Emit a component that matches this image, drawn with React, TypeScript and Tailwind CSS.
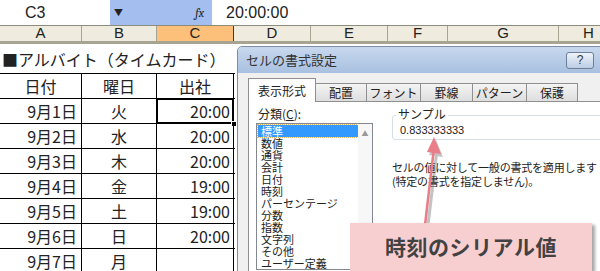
import React from 'react';

const jp = { fontFamily: '"Noto Sans CJK JP", "Noto Sans", sans-serif' };
const ar = { fontFamily: '"Liberation Sans", Arial, sans-serif' };

const rows = [
  ['9月1日', '火', '20:00'],
  ['9月2日', '水', '20:00'],
  ['9月3日', '木', '20:00'],
  ['9月4日', '金', '19:00'],
  ['9月5日', '土', '19:00'],
  ['9月6日', '日', '20:00'],
  ['9月7日', '月', ''],
];

const cols = [
  { k: 'A', w: 'w-[82px]' },
  { k: 'B', w: 'w-[75px]' },
  { k: 'C', w: 'w-[77px]' },
  { k: 'D', w: 'w-[77px]' },
  { k: 'E', w: 'w-[77px]' },
  { k: 'F', w: 'w-[60px]' },
  { k: 'G', w: 'w-[111px]' },
  { k: 'H', w: 'w-[60px]' },
];

const tabs = [
  { t: '表示形式', w: 'w-[68px]' },
  { t: '配置', w: 'w-[52px]' },
  { t: 'フォント', w: 'w-[55px]' },
  { t: '罫線', w: 'w-[53px]' },
  { t: 'パターン', w: 'w-[55px]' },
  { t: '保護', w: 'w-[52px]' },
];

const cats = ['標準', '数値', '通貨', '会計', '日付', '時刻', 'パーセンテージ', '分数', '指数', '文字列', 'その他', 'ユーザー定義'];

export default function App() {
  return (
    <div className="relative w-[600px] h-[271px] overflow-hidden bg-white text-[#222]" style={jp}>
      {/* formula bar */}
      <div className="flex h-[25px] items-center text-[16px]">
        <div className="w-[110px] h-full flex items-center pl-[25px]" style={ar}>C3</div>
        <div className="w-[102px] h-full bg-[#a4bef0] flex items-center justify-between pl-[4px] pr-[8px]">
          <span className="text-[9px] leading-none">▼</span>
          <span className="italic text-[12px] font-serif leading-none">fx</span>
        </div>
        <div className="pl-[14px]" style={ar}>20:00:00</div>
      </div>

      {/* column headers */}
      <div className="flex h-[19px] border-t border-[#8c8c7c] border-b-[3px] border-b-[#a7a491] bg-[#efecdf] text-[15px]" style={ar}>
        {cols.map((c) => (
          <div
            key={c.k}
            className={`${c.w} shrink-0 flex items-center justify-center border-r border-[#a7a491] ${c.k === 'C' ? 'bg-[#fdc07a] border-r-[#1c3a9c]' : ''}`}
          >
            {c.k}
          </div>
        ))}
      </div>

      {/* sheet */}
      <div className="h-[29px] flex items-center pl-[2px] text-[16px]">■アルバイト（タイムカード）</div>
      <div className="flex flex-col w-[235px] border-t border-black text-[16px]">
        <div className="flex h-[25px] border-b border-black">
          <div className="w-[82px] border-r border-black flex items-center justify-center">日付</div>
          <div className="w-[75px] border-r border-black flex items-center justify-center">曜日</div>
          <div className="w-[77px] border-r border-black flex items-center justify-center">出社</div>
        </div>
        {rows.map((r, i) => (
          <div key={r[0]} className="flex h-[25px] border-b border-black">
            <div className="w-[82px] border-r border-black flex items-center justify-end pr-[4px]">{r[0]}</div>
            <div className="w-[75px] border-r border-black flex items-center justify-center">{r[1]}</div>
            <div className="relative w-[77px] border-r border-black flex items-center justify-end pr-[3px]">
              {r[2]}
              {i === 0 && (
                <>
                  <div className="absolute inset-[-1px] border-2 border-black outline outline-1 outline-white -outline-offset-[3px]" />
                  <div className="absolute right-[-4px] bottom-[-4px] w-[6px] h-[6px] bg-black border border-white" />
                </>
              )}
            </div>
          </div>
        ))}
      </div>

      {/* dialog */}
      <div className="absolute left-[237px] top-[46px] w-[380px] h-[240px] rounded-t-[5px] border border-[#7d8ea4] bg-[#f0f0f0]">
        <div className="h-[26px] rounded-t-[5px] bg-gradient-to-b from-[#c8d8ee] to-[#a8c0e0] flex items-center justify-between pl-[8px] pr-[22px]">
          <span className="text-[13px] text-[#333]">セルの書式設定</span>
          <div className="w-[28px] h-[17px] rounded-[3px] border border-[#6e7e94] bg-gradient-to-b from-[#eef3fa] to-[#bccde5] flex items-center justify-center text-[12px] text-[#333]" style={ar}>?</div>
        </div>
        <div className="flex items-end pl-[10px] h-[28px]">
          {tabs.map((t, i) => (
            <div
              key={t.t}
              className={`${t.w} shrink-0 flex items-center justify-center text-[12px] border border-[#8f8f8f] border-b-0 ${
                i === 0 ? 'h-[24px] bg-white z-10 -mb-px' : 'h-[18px] bg-gradient-to-b from-[#f4f4f4] to-[#dedede] -ml-px'
              }`}
            >
              {t.t}
            </div>
          ))}
        </div>
        <div className="ml-[10px] h-[180px] border border-[#8f8f8f] bg-white flex pl-[7px] pt-[5px] gap-[19px]">
          <div className="flex flex-col">
            <div className="text-[12px] leading-[14px] pl-[2px]">
              分類(<span className="underline">C</span>):
            </div>
            <div className="mt-[2px] w-[117px] h-[147px] border border-[#828790] flex">
              <div className="flex-1 flex flex-col pt-[1px] pl-[1px] text-[11px]">
                {cats.map((c, i) => (
                  <div
                    key={c}
                    className={`h-[12.1px] leading-[12px] pl-[3px] whitespace-nowrap ${i === 0 ? 'bg-[#3399ff] text-white outline outline-1 outline-dotted outline-[#f0b060]' : ''}`}
                  >
                    {c}
                  </div>
                ))}
              </div>
              <div className="w-[14px] bg-[#f7f7f7] flex justify-center pt-[6px]">
                <span className="text-[7px] text-[#999] leading-none">▲</span>
              </div>
            </div>
          </div>
          <div className="flex flex-col pt-[8px]">
            <div className="relative w-[220px] h-[25px] border border-[#d5dfe5] rounded-[3px] pl-[7px] pt-[8px]">
              <span className="absolute left-[3px] -top-[9px] bg-white px-[2px] text-[12px] leading-[14px]">サンプル</span>
              <span className="text-[11px] leading-[12px] block" style={ar}>0.833333333</span>
            </div>
            <div className="mt-[20px] text-[11px] leading-[14px] whitespace-nowrap tracking-[-0.2px]">
              <div>セルの値に対して一般の書式を適用します</div>
              <div>(特定の書式を指定しません)。</div>
            </div>
          </div>
        </div>
      </div>

      {/* arrow */}
      <svg className="absolute left-0 top-0" width="600" height="271" viewBox="0 0 600 271">
        <g opacity="0.35" fill="#555" stroke="#555">
          <line x1="428" y1="225" x2="437" y2="150" strokeWidth="3" />
          <polygon points="436,140 443,157 429,155" stroke="none" />
        </g>
        <g fill="#e97d88" stroke="#e97d88">
          <line x1="425" y1="225" x2="434" y2="148" strokeWidth="2.5" />
          <polygon points="434,137 441,154 427,152" stroke="none" />
        </g>
      </svg>

      {/* callout */}
      <div className="absolute left-[350px] top-[223px] w-[242px] h-[48px] bg-[#f7cfd1] shadow-[3px_2px_3px_rgba(0,0,0,0.35)] flex items-center justify-center">
        <span className="text-[21px] font-bold text-[#424242] tracking-[0.5px]">時刻のシリアル値</span>
      </div>
    </div>
  );
}
